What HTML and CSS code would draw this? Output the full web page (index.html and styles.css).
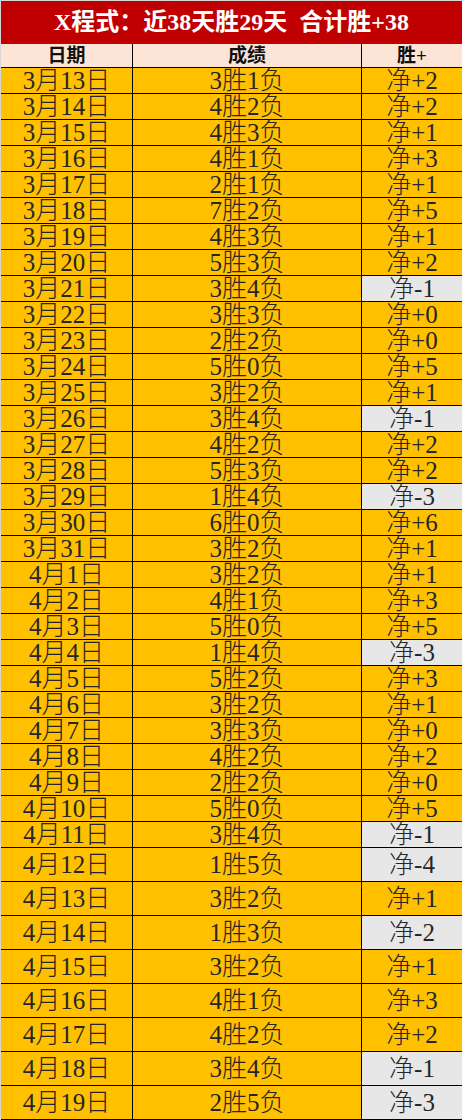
FILE: index.html
```html
<!DOCTYPE html>
<html lang="zh-CN">
<head>
<meta charset="utf-8">
<title>X程式</title>
<link rel="stylesheet" href="styles.css">
</head>
<body>
<div class="sheet">
  <div class="title">X程式：近38天胜29天&nbsp;&nbsp;合计胜+38</div>
  <div class="row head"><div class="c c1">日期</div><div class="c c2">成绩</div><div class="c c3">胜+</div></div>
  <div class="row"><div class="c c1">3月13日</div><div class="c c2">3胜1负</div><div class="c c3">净+2</div></div>
  <div class="row"><div class="c c1">3月14日</div><div class="c c2">4胜2负</div><div class="c c3">净+2</div></div>
  <div class="row"><div class="c c1">3月15日</div><div class="c c2">4胜3负</div><div class="c c3">净+1</div></div>
  <div class="row"><div class="c c1">3月16日</div><div class="c c2">4胜1负</div><div class="c c3">净+3</div></div>
  <div class="row"><div class="c c1">3月17日</div><div class="c c2">2胜1负</div><div class="c c3">净+1</div></div>
  <div class="row"><div class="c c1">3月18日</div><div class="c c2">7胜2负</div><div class="c c3">净+5</div></div>
  <div class="row"><div class="c c1">3月19日</div><div class="c c2">4胜3负</div><div class="c c3">净+1</div></div>
  <div class="row"><div class="c c1">3月20日</div><div class="c c2">5胜3负</div><div class="c c3">净+2</div></div>
  <div class="row"><div class="c c1">3月21日</div><div class="c c2">3胜4负</div><div class="c c3 neg">净-1</div></div>
  <div class="row"><div class="c c1">3月22日</div><div class="c c2">3胜3负</div><div class="c c3">净+0</div></div>
  <div class="row"><div class="c c1">3月23日</div><div class="c c2">2胜2负</div><div class="c c3">净+0</div></div>
  <div class="row"><div class="c c1">3月24日</div><div class="c c2">5胜0负</div><div class="c c3">净+5</div></div>
  <div class="row"><div class="c c1">3月25日</div><div class="c c2">3胜2负</div><div class="c c3">净+1</div></div>
  <div class="row"><div class="c c1">3月26日</div><div class="c c2">3胜4负</div><div class="c c3 neg">净-1</div></div>
  <div class="row"><div class="c c1">3月27日</div><div class="c c2">4胜2负</div><div class="c c3">净+2</div></div>
  <div class="row"><div class="c c1">3月28日</div><div class="c c2">5胜3负</div><div class="c c3">净+2</div></div>
  <div class="row"><div class="c c1">3月29日</div><div class="c c2">1胜4负</div><div class="c c3 neg">净-3</div></div>
  <div class="row"><div class="c c1">3月30日</div><div class="c c2">6胜0负</div><div class="c c3">净+6</div></div>
  <div class="row"><div class="c c1">3月31日</div><div class="c c2">3胜2负</div><div class="c c3">净+1</div></div>
  <div class="row"><div class="c c1">4月1日</div><div class="c c2">3胜2负</div><div class="c c3">净+1</div></div>
  <div class="row"><div class="c c1">4月2日</div><div class="c c2">4胜1负</div><div class="c c3">净+3</div></div>
  <div class="row"><div class="c c1">4月3日</div><div class="c c2">5胜0负</div><div class="c c3">净+5</div></div>
  <div class="row"><div class="c c1">4月4日</div><div class="c c2">1胜4负</div><div class="c c3 neg">净-3</div></div>
  <div class="row"><div class="c c1">4月5日</div><div class="c c2">5胜2负</div><div class="c c3">净+3</div></div>
  <div class="row"><div class="c c1">4月6日</div><div class="c c2">3胜2负</div><div class="c c3">净+1</div></div>
  <div class="row"><div class="c c1">4月7日</div><div class="c c2">3胜3负</div><div class="c c3">净+0</div></div>
  <div class="row"><div class="c c1">4月8日</div><div class="c c2">4胜2负</div><div class="c c3">净+2</div></div>
  <div class="row"><div class="c c1">4月9日</div><div class="c c2">2胜2负</div><div class="c c3">净+0</div></div>
  <div class="row"><div class="c c1">4月10日</div><div class="c c2">5胜0负</div><div class="c c3">净+5</div></div>
  <div class="row"><div class="c c1">4月11日</div><div class="c c2">3胜4负</div><div class="c c3 neg">净-1</div></div>
  <div class="row tall"><div class="c c1">4月12日</div><div class="c c2">1胜5负</div><div class="c c3 neg">净-4</div></div>
  <div class="row tall"><div class="c c1">4月13日</div><div class="c c2">3胜2负</div><div class="c c3">净+1</div></div>
  <div class="row tall"><div class="c c1">4月14日</div><div class="c c2">1胜3负</div><div class="c c3 neg">净-2</div></div>
  <div class="row tall"><div class="c c1">4月15日</div><div class="c c2">3胜2负</div><div class="c c3">净+1</div></div>
  <div class="row tall"><div class="c c1">4月16日</div><div class="c c2">4胜1负</div><div class="c c3">净+3</div></div>
  <div class="row tall"><div class="c c1">4月17日</div><div class="c c2">4胜2负</div><div class="c c3">净+2</div></div>
  <div class="row tall"><div class="c c1">4月18日</div><div class="c c2">3胜4负</div><div class="c c3 neg">净-1</div></div>
  <div class="row tall"><div class="c c1">4月19日</div><div class="c c2">2胜5负</div><div class="c c3 neg">净-3</div></div>
</div>
</body>
</html>
```
FILE: styles.css
```css
* { box-sizing: border-box; }
html, body { margin: 0; padding: 0; background: #ffffff; }
.sheet {
  width: 462px;
  border-left: 1px solid #d6d6d6;
  font-family: "Liberation Serif", "Noto Sans CJK SC", serif;
}
.title {
  height: 44px;
  border-top: 1px solid #d6d6d6;
  background: #c00000;
  color: #ffffff;
  font-size: 24px;
  font-weight: 700;
  line-height: 42px;
  text-align: center;
  white-space: nowrap;
}
.row {
  display: grid;
  grid-template-columns: 132px 229px 100px;
  height: 26px;
  border-bottom: 1px solid #000000;
  background: #ffc000;
  color: #262626;
  font-size: 25px;
  font-weight: 300;
  line-height: 25px;
}
.row.tall { height: 34px; line-height: 33px; }
.row.head {
  height: 24px;
  background: #fce4d6;
  color: #111111;
  font-size: 19px;
  font-weight: 700;
  line-height: 23px;
}
.c {
  text-align: center;
  white-space: nowrap;
  overflow: visible;
}
.c1, .c2 { border-right: 1px solid #000000; }
.c3.neg { background: #e7e7e7; }
```
